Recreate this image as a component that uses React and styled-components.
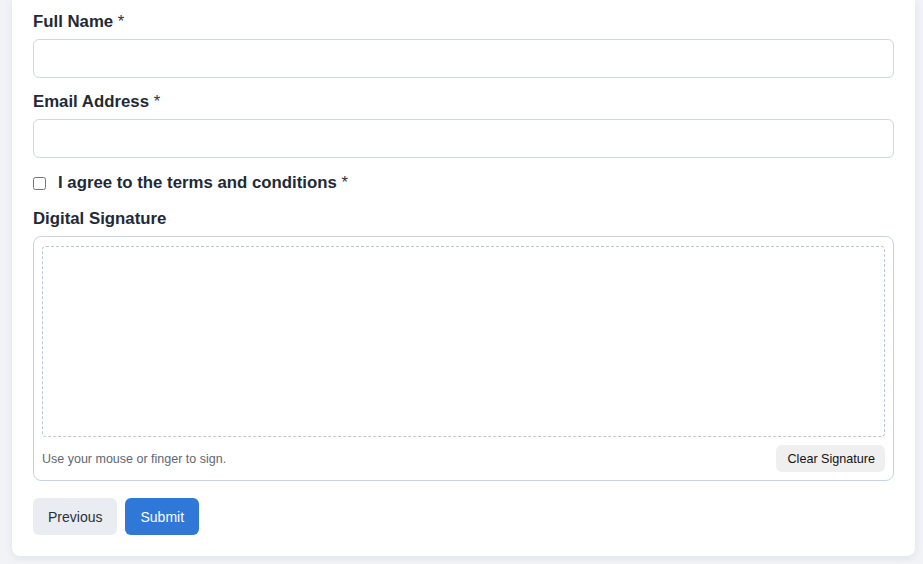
import React from "react";
import styled, { createGlobalStyle } from "styled-components";

const Global = createGlobalStyle`
  html, body { margin: 0; padding: 0; }
  body {
    background: #f2f3f7;
    font-family: "Liberation Sans", Arial, sans-serif;
    color: #1f2a37;
  }
  * { box-sizing: border-box; }
`;

const Page = styled.div`
  padding: 0 8px 8px 12px;
`;

const Card = styled.form`
  background: #ffffff;
  border-radius: 0 0 8px 8px;
  box-shadow: 0 2px 8px rgba(30, 40, 60, 0.08);
  padding: 12px 21px 21px 21px;
`;

const Group = styled.div`
  margin-bottom: ${(p) => p.$mb ?? 14}px;
`;

const Label = styled.label`
  display: block;
  font-size: 16.8px;
  line-height: 20px;
  font-weight: bold;
  color: #1f2a37;
  margin-bottom: 7px;
`;

const Req = styled.span`
  font-weight: normal;
  color: #2b3440;
`;

const Input = styled.input`
  display: block;
  width: 100%;
  height: 39px;
  border: 1px solid #d0d6de;
  border-radius: 6px;
  padding: 0 10px;
  font-size: 16px;
  font-family: inherit;
  background: #fff;
  outline: none;
`;

const CheckRow = styled.label`
  display: flex;
  align-items: center;
  gap: 12px;
  height: 22px;
  font-size: 16.8px;
  font-weight: bold;
  color: #1f2a37;
  margin-bottom: 15px;
`;

const Check = styled.input`
  margin: 0;
  width: 13px;
  height: 13px;
`;

const SigBox = styled.div`
  border: 1px solid #c9d3df;
  border-radius: 8px;
  padding: 9px 8px 8px 8px;
`;

const Canvas = styled.div`
  height: 191px;
  border: 1px dashed #b9c6d6;
  border-radius: 4px;
  background: #fff;
`;

const SigFooter = styled.div`
  display: flex;
  align-items: center;
  justify-content: space-between;
  margin-top: 8px;
`;

const Hint = styled.span`
  font-size: 12.5px;
  color: #5f6670;
`;

const SmallButton = styled.button`
  height: 27px;
  padding: 0 10px 0 11px;
  border: none;
  border-radius: 6px;
  background: #efefef;
  color: #111;
  font-family: inherit;
  font-size: 12.6px;
  cursor: pointer;
`;

const Actions = styled.div`
  display: flex;
  gap: 8px;
  margin-top: 17px;
`;

const Button = styled.button`
  height: 37px;
  padding: 0 15px;
  border: none;
  border-radius: 6px;
  font-family: inherit;
  font-size: 14px;
  cursor: pointer;
  background: ${(p) => (p.$primary ? "#2f78d8" : "#e9edf2")};
  color: ${(p) => (p.$primary ? "#ffffff" : "#2a2f36")};
`;

export default function App() {
  return (
    <>
      <Global />
      <Page>
        <Card onSubmit={(e) => e.preventDefault()}>
          <Group>
            <Label>
              Full Name <Req>*</Req>
            </Label>
            <Input type="text" />
          </Group>
          <Group>
            <Label>
              Email Address <Req>*</Req>
            </Label>
            <Input type="email" />
          </Group>
          <CheckRow>
            <Check type="checkbox" />
            <span>
              I agree to the terms and conditions <Req>*</Req>
            </span>
          </CheckRow>
          <Group $mb={0}>
            <Label>Digital Signature</Label>
            <SigBox>
              <Canvas />
              <SigFooter>
                <Hint>Use your mouse or finger to sign.</Hint>
                <SmallButton type="button">Clear Signature</SmallButton>
              </SigFooter>
            </SigBox>
          </Group>
          <Actions>
            <Button type="button">Previous</Button>
            <Button type="submit" $primary>
              Submit
            </Button>
          </Actions>
        </Card>
      </Page>
    </>
  );
}
